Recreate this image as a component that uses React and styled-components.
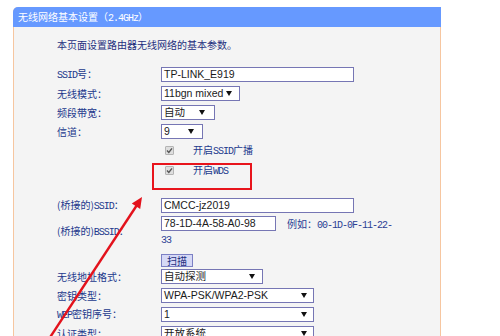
import React from "react";
import styled, { createGlobalStyle } from "styled-components";

const GlobalStyle = createGlobalStyle`
  html, body { margin: 0; padding: 0; background: #ffffff; }
  body { font-family: "Noto Sans CJK SC", "Noto Sans", sans-serif; }
`;

const Page = styled.div`
  position: relative;
  width: 500px;
  height: 336px;
  overflow: hidden;
  box-sizing: border-box;
  padding: 7px 0 0 13px;
  background: #fff;
`;

const Panel = styled.section`
  width: 428px;
  min-height: 340px;
  box-sizing: border-box;
  background: #f4f4f4;
  border-left: 1px solid #f6c6a0;
  border-right: 1px solid #f6c6a0;
  border-radius: 5px 0 0 0;
`;

const Header = styled.div`
  height: 20px;
  margin: 0 -1px;
  padding-left: 5px;
  background: #6699ff;
  color: #ffffff;
  font-size: 10px;
  line-height: 20px;
  border-radius: 5px 0 0 0;
  white-space: nowrap;
`;

const Body = styled.div`
  padding: 12px 0 0 43px;
`;

const Intro = styled.div`
  font-size: 10px;
  line-height: 12px;
  color: #1e2f7e;
  margin-bottom: 14px;
`;

const Lat = styled.span`
  font-family: "Liberation Mono", "DejaVu Sans Mono", monospace;
  font-size: 10px;
  letter-spacing: -1px;
`;

const Row = styled.div`
  position: relative;
  display: flex;
  align-items: ${(p) => p.$align || "center"};
  height: ${(p) => p.$h || 19}px;
  margin-bottom: ${(p) => p.$mb || 0}px;
`;

const Label = styled.div`
  width: 104px;
  flex: none;
  font-size: 10px;
  line-height: 12px;
  color: #22388c;
  white-space: nowrap;
`;

const Field = styled.div`
  flex: 1;
  display: flex;
  flex-direction: ${(p) => (p.$column ? "column" : "row")};
  align-items: ${(p) => (p.$column ? "flex-start" : "center")};
`;

const TextBox = styled.div`
  width: ${(p) => p.$w}px;
  height: 15px;
  box-sizing: border-box;
  border: 1px solid #7676b4;
  background: #ffffff;
  padding-left: 2px;
  font-family: "Liberation Sans", Arial, sans-serif;
  font-size: 10.5px;
  line-height: 13px;
  color: #1a1a1a;
  white-space: nowrap;
  overflow: hidden;
`;

const SelectBox = styled(TextBox)`
  display: flex;
  align-items: center;
  justify-content: space-between;
  padding-right: ${(p) => p.$pr || 7}px;
  font-family: "Liberation Sans", Arial, "Noto Sans CJK SC", sans-serif;
`;

const Caret = styled.span`
  width: 0;
  height: 0;
  margin-left: 3px;
  border-left: 3px solid transparent;
  border-right: 3px solid transparent;
  border-top: 5px solid #111;
  flex: none;
`;

const CheckRow = styled.div`
  display: flex;
  align-items: center;
  padding-left: 4px;
`;

const CheckBox = styled.span`
  width: 9px;
  height: 9px;
  box-sizing: border-box;
  border: 1px solid #b4b4b4;
  border-radius: 1px;
  background: #dedede;
  display: flex;
  align-items: center;
  justify-content: center;
  margin-right: 19px;
  margin-top: -2px;
`;

const CheckText = styled.span`
  font-size: 10px;
  line-height: 12px;
  color: #22388c;
  white-space: nowrap;
`;

const Highlight = styled.div`
  position: absolute;
  left: 95px;
  top: 2px;
  width: 100px;
  height: 27px;
  box-sizing: border-box;
  border: 2px solid #e8141c;
  pointer-events: none;
`;

const Line = styled.div`
  display: flex;
  align-items: center;
  height: ${(p) => p.$h}px;
  font-size: 10px;
  color: #2c3f94;
  white-space: nowrap;
`;

const Hint = styled.span`
  margin-left: 11px;
  font-size: 10px;
  color: #2c3f94;
`;

const ScanButton = styled.button`
  width: 32px;
  height: 13px;
  padding: 0;
  box-sizing: border-box;
  border: 1px solid #7c80c4;
  background: #d6d9f6;
  font-family: "Noto Sans CJK SC", sans-serif;
  font-size: 10px;
  line-height: 11px;
  color: #1e2f7e;
`;

const Overlay = styled.svg`
  position: absolute;
  left: 0;
  top: 0;
  width: 500px;
  height: 336px;
  pointer-events: none;
`;

const Check = () => (
  <CheckBox>
    <svg width="7" height="7" viewBox="0 0 7 7">
      <path d="M1 3.6 L2.8 5.4 L6 1.4" fill="none" stroke="#555" strokeWidth="1.4" />
    </svg>
  </CheckBox>
);

const Select = ({ w, children, pr }) => (
  <SelectBox $w={w} $pr={pr}>
    <span>{children}</span>
    <Caret />
  </SelectBox>
);

export default function App() {
  return (
    <Page>
      <GlobalStyle />
      <Panel>
        <Header>
          无线网络基本设置（<Lat>2.4GHz</Lat>）
        </Header>
        <Body>
          <Intro>本页面设置路由器无线网络的基本参数。</Intro>

          <Row>
            <Label>
              <Lat>SSID</Lat>号：
            </Label>
            <Field>
              <TextBox $w={193}>TP-LINK_E919</TextBox>
            </Field>
          </Row>
          <Row>
            <Label>无线模式：</Label>
            <Field>
              <Select w={79}>11bgn mixed</Select>
            </Field>
          </Row>
          <Row>
            <Label>频段带宽：</Label>
            <Field>
              <Select w={54} pr={9}>自动</Select>
            </Field>
          </Row>
          <Row>
            <Label>信道：</Label>
            <Field>
              <Select w={42} pr={8}>9</Select>
            </Field>
          </Row>
          <Row $h={20}>
            <Label />
            <Field>
              <CheckRow>
                <Check />
                <CheckText>
                  开启<Lat>SSID</Lat>广播
                </CheckText>
              </CheckRow>
            </Field>
          </Row>
          <Row $h={20} $mb={15}>
            <Label />
            <Field>
              <CheckRow>
                <Check />
                <CheckText>
                  开启<Lat>WDS</Lat>
                </CheckText>
              </CheckRow>
            </Field>
            <Highlight />
          </Row>
          <Row>
            <Label>
              (桥接的)<Lat>SSID</Lat>：
            </Label>
            <Field>
              <TextBox $w={193}>CMCC-jz2019</TextBox>
            </Field>
          </Row>
          <Row $h={33}>
            <Label>
              (桥接的)<Lat>BSSID</Lat>：
            </Label>
            <Field $column>
              <Line $h={17}>
                <TextBox $w={115}>78-1D-4A-58-A0-98</TextBox>
                <Hint>
                  例如：<Lat>00-1D-0F-11-22-</Lat>
                </Hint>
              </Line>
              <Line $h={16}>
                <Lat>33</Lat>
              </Line>
            </Field>
          </Row>
          <Row $align="flex-end">
            <Label />
            <Field>
              <ScanButton type="button">扫描</ScanButton>
            </Field>
          </Row>
          <Row>
            <Label>无线地址格式：</Label>
            <Field>
              <Select w={102} pr={7}>自动探测</Select>
            </Field>
          </Row>
          <Row>
            <Label>密钥类型：</Label>
            <Field>
              <Select w={153} pr={6}>WPA-PSK/WPA2-PSK</Select>
            </Field>
          </Row>
          <Row>
            <Label>
              <Lat>WEP</Lat>密钥序号：
            </Label>
            <Field>
              <Select w={153} pr={6}>1</Select>
            </Field>
          </Row>
          <Row>
            <Label>认证类型：</Label>
            <Field>
              <Select w={153} pr={6}>开放系统</Select>
            </Field>
          </Row>
        </Body>
      </Panel>
      <Overlay viewBox="0 0 500 336">
        <line x1="45" y1="345" x2="137" y2="205" stroke="#e3121c" strokeWidth="2.4" />
        <polygon points="142,197 140.2,209 131.8,203.5" fill="#e3121c" />
      </Overlay>
    </Page>
  );
}
